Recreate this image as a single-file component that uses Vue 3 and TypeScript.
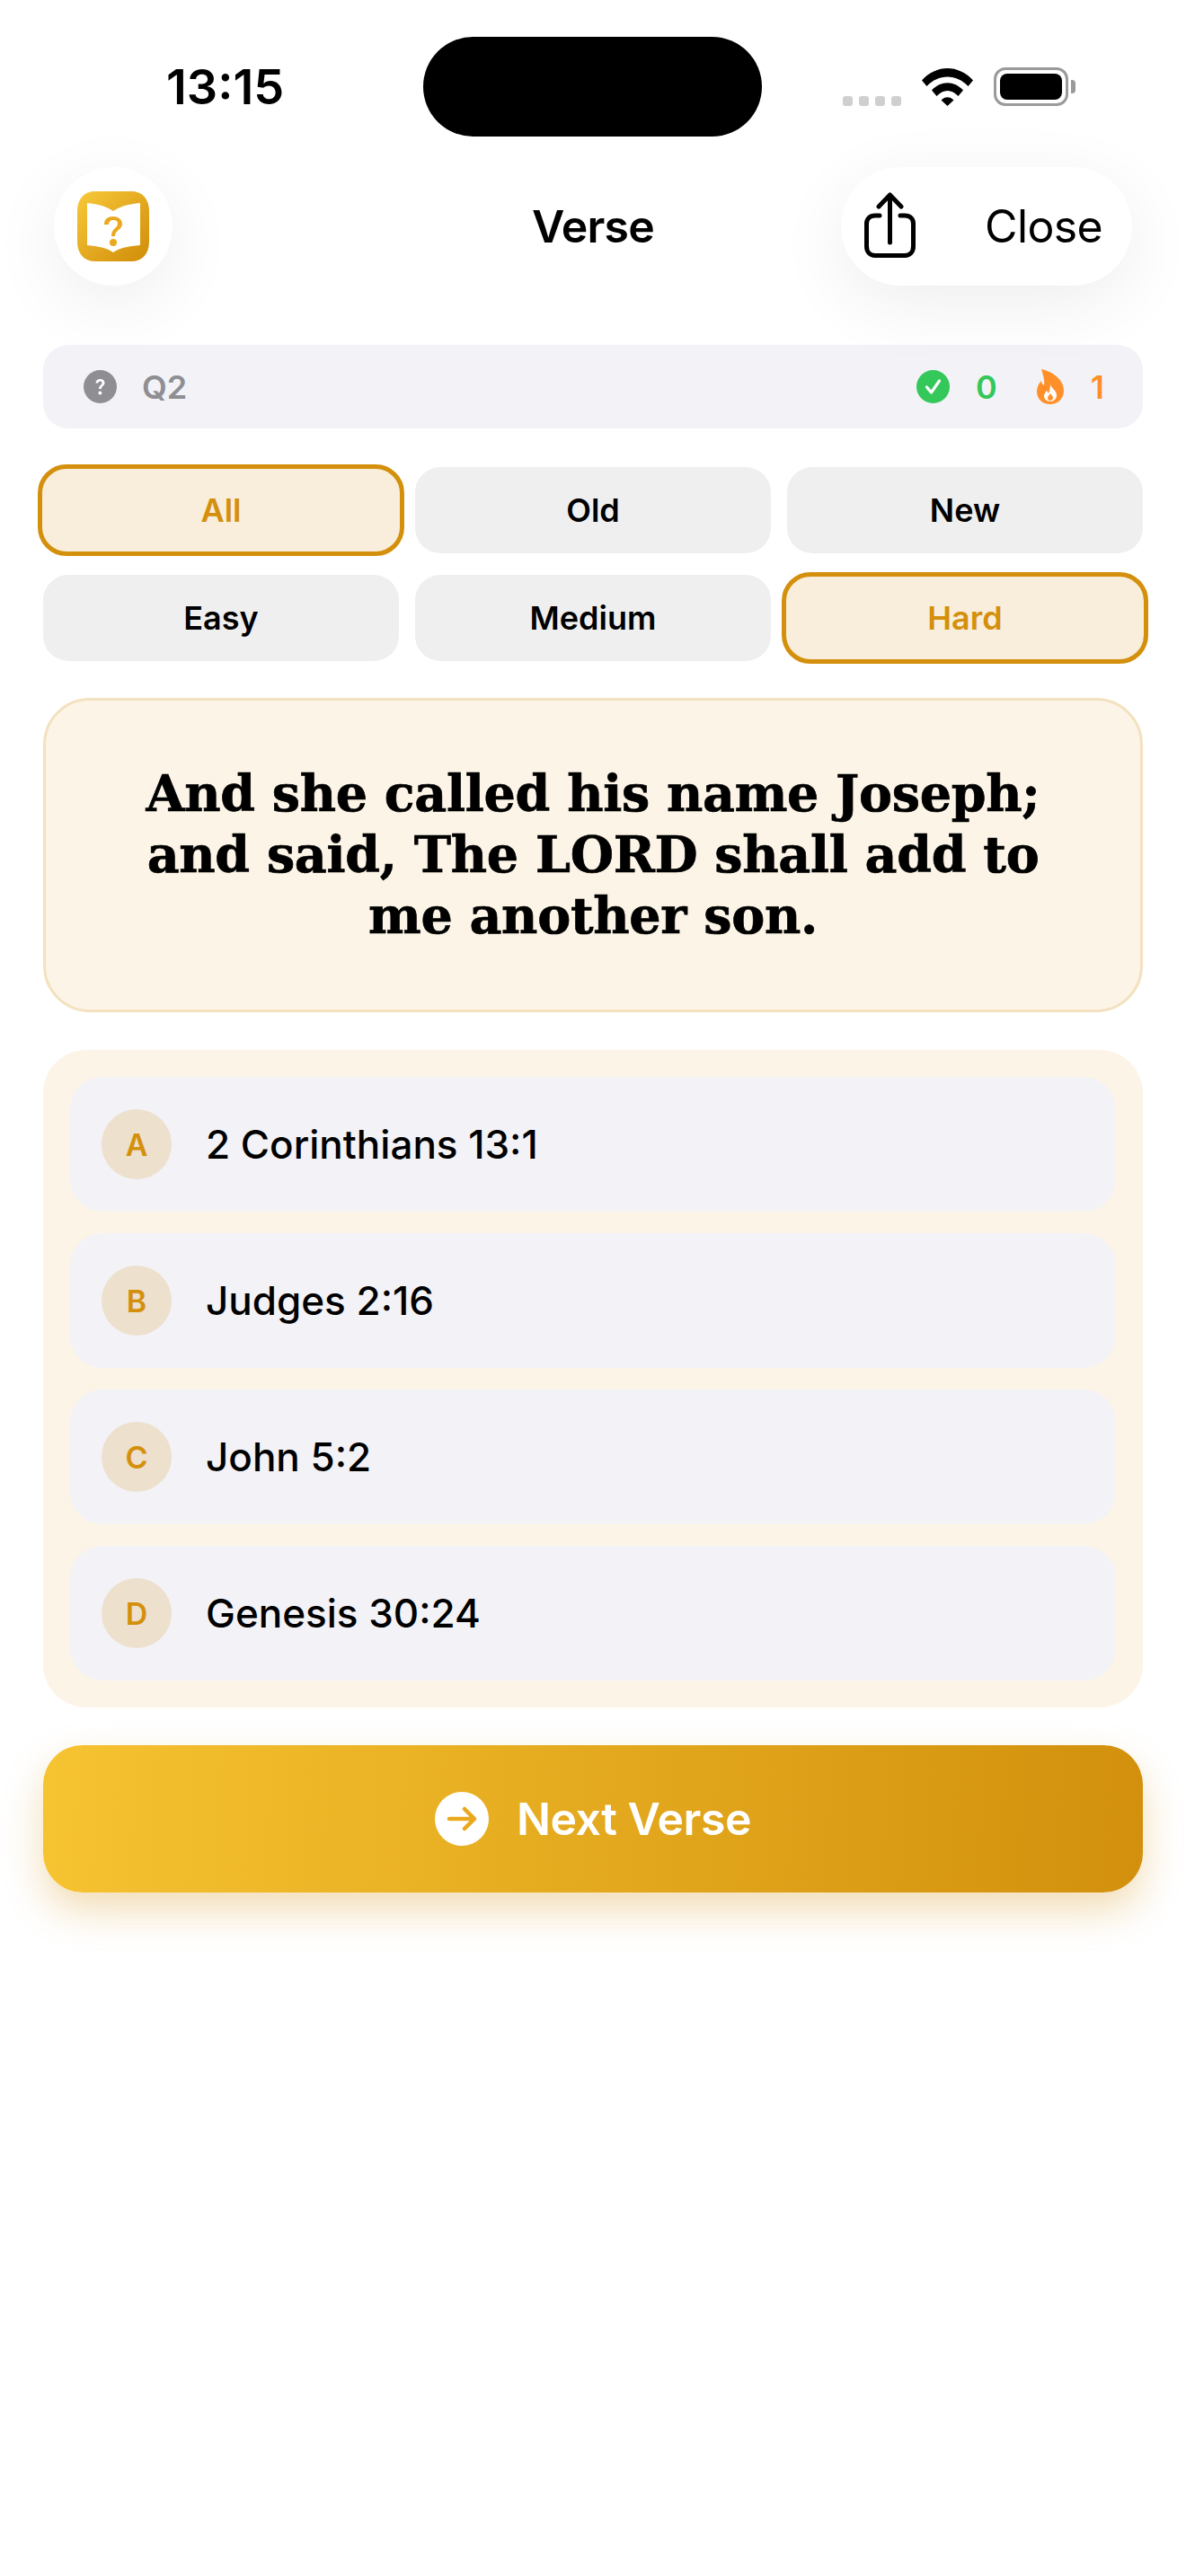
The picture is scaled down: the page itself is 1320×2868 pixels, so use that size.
<script setup lang="ts">
import { ref } from 'vue';

type Answer = { letter: string; reference: string };

const testamentFilters = ref(['All', 'Old', 'New']);
const levelFilters = ref(['Easy', 'Medium', 'Hard']);
const selectedTestament = ref('All');
const selectedLevel = ref('Hard');

const answers = ref<Answer[]>([
  { letter: 'A', reference: '2 Corinthians 13:1' },
  { letter: 'B', reference: 'Judges 2:16' },
  { letter: 'C', reference: 'John 5:2' },
  { letter: 'D', reference: 'Genesis 30:24' },
]);
</script>

<template>
  <div class="screen">
    <div class="status-bar">
      <span class="clock">13:15</span>
      <div class="island"></div>
      <div class="status-icons">
        <div class="signal"><i></i><i></i><i></i><i></i></div>
        <svg class="wifi" viewBox="0 0 57 42" width="57" height="42">
          <path d="M0 13.5C16-4.5 41-4.5 57 13.5L51.500 20C38.500 6 18.500 6 5.500 20Z" />
          <path d="M11 24.500C21 13.500 36 13.500 46 24.500L40.500 31C33 23 24 23 16.500 31Z" />
          <path d="M21.500 35.500C25.500 31 31.500 31 35.500 35.500L28.500 42Z" />
        </svg>
        <div class="battery"><div class="battery-fill"></div></div>
        <div class="battery-nub"></div>
      </div>
    </div>

    <header class="nav">
      <div class="nav-round">
        <svg class="logo" viewBox="0 0 80 78" width="80" height="78">
          <defs>
            <linearGradient id="logoGrad" x1="0" y1="0" x2="1" y2="1">
              <stop offset="0" stop-color="#f8c93a" />
              <stop offset="1" stop-color="#d08c08" />
            </linearGradient>
          </defs>
          <path d="M20 0H60C72 0 80 8 80 22V56C80 70 72 78 60 78H20C8 78 0 70 0 56V22C0 8 8 0 20 0Z" fill="url(#logoGrad)" />
          <path d="M11 13C23 14 33 17 40 22C47 17 57 14 70 13V60C57 61 47 63 40 68C33 63 23 61 11 60Z" fill="#fff" />
          <path d="M30 37C30 31 34 28 40 28C46 28 50 32 50 36C50 43 42 43 42 50H38C38 41 45 41 45 36C45 33 43 32 40 32C37 32 35 34 35 37Z" fill="#eaa81e" />
          <circle cx="40" cy="57" r="4" fill="#eaa81e" />
        </svg>
      </div>
      <h1 class="nav-title">Verse</h1>
      <div class="nav-pill">
        <svg class="share" viewBox="0 0 57 73" width="57" height="73">
          <path d="M17 26H12C6 26 2.500 29.500 2.500 35V60C2.500 66.500 6 70.500 12 70.500H45C51 70.500 54.500 66.500 54.500 60V35C54.500 29.500 51 26 45 26H40" fill="none" stroke="#000" stroke-width="5" stroke-linecap="round" />
          <path d="M28.500 56V3M16 16L28.500 3L41 16" fill="none" stroke="#000" stroke-width="5" stroke-linecap="round" stroke-linejoin="round" />
        </svg>
        <span class="close-label">Close</span>
      </div>
    </header>

    <main class="content">
      <section class="score-bar">
        <div class="score-left">
          <svg viewBox="0 0 37 37" width="37" height="37">
            <circle cx="18.500" cy="18.500" r="18.500" fill="#8e8e93" />
            <path d="M13.500 14.500C13.500 11.500 15.500 10 18.500 10C21.500 10 23.500 11.700 23.500 14.200C23.500 17.500 19.800 17.700 19.800 21H17C17 16.800 20.500 16.800 20.500 14.400C20.500 13 19.700 12.400 18.500 12.400C17.200 12.400 16.400 13.200 16.400 14.500Z" fill="#fff" />
            <circle cx="18.400" cy="25.500" r="2" fill="#fff" />
          </svg>
          <span class="question-no">Q2</span>
        </div>
        <div class="score-right">
          <svg viewBox="0 0 37 37" width="37" height="37">
            <circle cx="18.500" cy="18.500" r="18.500" fill="#34c759" />
            <path d="M11.500 19L16.500 25L25.500 12" fill="none" stroke="#fff" stroke-width="3.200" stroke-linecap="round" stroke-linejoin="round" />
          </svg>
          <span class="count-good">0</span>
          <svg class="flame" viewBox="0 0 30 39" width="30" height="39">
            <path d="M5 0C11 1 30 8 30 24C30 33 23 39 15 39C6 39 0 33 0 25C0 20 2 16 5 13C5 15 6 17 8 18C9 12 7 7 5 0Z" fill="#ff9029" />
            <path d="M15 17C16 21 22 24 22 29C22 33 19 36 15 36C11 36 8 33 8 30C8 27 10 26 11 24C12 25 12 26 13 27C14 24 15 21 15 17Z" fill="#fff" />
            <path d="M15 27C16 29 18 30 18 32C18 34 16 35 15 35C13 35 12 34 12 32C12 30 14 29 15 27Z" fill="#ff9029" />
          </svg>
          <span class="count-streak">1</span>
        </div>
      </section>

      <section class="filters">
        <button
          v-for="item in testamentFilters"
          :key="item"
          class="filter"
          :class="{ active: item === selectedTestament }"
          @click="selectedTestament = item"
        >{{ item }}</button>
        <button
          v-for="item in levelFilters"
          :key="item"
          class="filter"
          :class="{ active: item === selectedLevel }"
          @click="selectedLevel = item"
        >{{ item }}</button>
      </section>

      <section class="verse-card">
        <p>And she called his name Joseph;<br>and said, The LORD shall add to<br>me another son.</p>
      </section>

      <section class="answers">
        <div v-for="answer in answers" :key="answer.letter" class="answer">
          <span class="answer-letter">{{ answer.letter }}</span>
          <span class="answer-text">{{ answer.reference }}</span>
        </div>
      </section>

      <button class="next-btn">
        <svg viewBox="0 0 60 60" width="60" height="60">
          <circle cx="30" cy="30" r="30" fill="#fff" />
          <path d="M16 30H44M33 19L44 30L33 41" fill="none" stroke="#eaa81e" stroke-width="4.500" stroke-linecap="round" stroke-linejoin="round" />
        </svg>
        <span>Next Verse</span>
      </button>
    </main>
  </div>
</template>

<style>
html,
body {
  margin: 0;
  background: #fff;
}
</style>

<style scoped>
.screen {
  width: 1320px;
  height: 2868px;
  background: #fff;
  color: #000;
  font-family: Inter, "Liberation Sans", sans-serif;
  overflow: hidden;
}

.status-bar {
  display: flex;
  height: 186px;
  box-sizing: border-box;
  padding-top: 41px;
}

.clock {
  width: 286px;
  margin-left: 185px;
  font-size: 54px;
  font-weight: 600;
  line-height: 111px;
}

.island {
  width: 377px;
  height: 111px;
  border-radius: 56px;
  background: #000;
}

.status-icons {
  display: flex;
  align-items: flex-end;
  height: 77px;
  margin-left: 90px;
}

.signal {
  display: flex;
  gap: 7px;
  width: 88px;
}

.signal i {
  width: 11px;
  height: 11px;
  border-radius: 3px;
  background: #cfcfcf;
}

.wifi {
  display: block;
  fill: #000;
}

.battery {
  width: 83px;
  height: 43px;
  margin-left: 23px;
  padding: 4px;
  box-sizing: border-box;
  border: 3px solid #9a9a9a;
  border-radius: 13px;
}

.battery-fill {
  height: 100%;
  border-radius: 8px;
  background: #000;
}

.battery-nub {
  width: 5px;
  height: 15px;
  margin: 0 0 14px 3px;
  border-radius: 0 4px 4px 0;
  background: #9a9a9a;
}

.nav {
  position: relative;
  display: grid;
  grid-template-columns: 1fr auto 1fr;
  align-items: center;
  height: 132px;
  padding: 0 60px;
}

.nav-round,
.nav-pill {
  display: flex;
  align-items: center;
  height: 132px;
  background: #fff;
  box-shadow: 0 20px 80px rgba(0, 0, 0, 0.07);
}

.nav-round {
  justify-content: center;
  width: 132px;
  border-radius: 50%;
}

.logo {
  display: block;
}

.nav-title {
  margin: 0;
  font-size: 50px;
  font-weight: 600;
  letter-spacing: -0.8px;
}

.nav-pill {
  justify-self: end;
  box-sizing: border-box;
  width: 324px;
  padding-left: 26px;
  border-radius: 66px;
}

.share {
  display: block;
  margin-top: -3px;
}

.close-label {
  margin-left: 77px;
  font-size: 50px;
  font-weight: 400;
  letter-spacing: -0.6px;
}

.content {
  display: flex;
  flex-direction: column;
  padding: 66px 48px 0;
}

.score-bar {
  display: flex;
  justify-content: space-between;
  align-items: center;
  height: 93px;
  padding: 0 43px 0 45px;
  border-radius: 28px;
  background: #f2f2f7;
}

.score-bar svg {
  display: block;
}

.score-left,
.score-right {
  display: flex;
  align-items: center;
  font-size: 36px;
  font-weight: 600;
}

.question-no {
  margin-left: 28px;
  color: #8e8e93;
}

.count-good {
  margin-left: 29px;
  color: #34c759;
}

.flame {
  margin-left: 44px;
}

.count-streak {
  margin-left: 30px;
  color: #ff9029;
}

.filters {
  display: grid;
  grid-template-columns: repeat(3, 1fr);
  gap: 24px 18px;
  margin-top: 43px;
}

.filter {
  height: 96px;
  padding: 0;
  border: none;
  border-radius: 28px;
  background: #efeff0;
  color: #000;
  font-family: inherit;
  font-size: 36px;
  font-weight: 600;
}

.filter.active {
  height: 102px;
  margin: -3px -6px;
  border: 5px solid #d4900c;
  border-radius: 32px;
  background: #f9eedc;
  color: #d4900c;
}

.verse-card {
  display: flex;
  justify-content: center;
  align-items: center;
  box-sizing: border-box;
  height: 350px;
  margin-top: 41px;
  border: 3px solid #f3e1bf;
  border-radius: 52px;
  background: #fcf4e6;
}

.verse-card p {
  margin: 0;
  font-family: "DejaVu Serif", "Liberation Serif", serif;
  font-size: 55.5px;
  font-weight: 700;
  line-height: 68px;
  letter-spacing: -0.3px;
  -webkit-text-stroke: 0.7px #000;
  text-align: center;
}

.answers {
  display: flex;
  flex-direction: column;
  gap: 24px;
  margin-top: 42px;
  padding: 30px;
  border-radius: 48px;
  background: #fcf4e6;
}

.answer {
  display: flex;
  align-items: center;
  height: 150px;
  padding-left: 35px;
  border-radius: 36px;
  background: #f2f2f7;
}

.answer-letter {
  display: flex;
  justify-content: center;
  align-items: center;
  width: 78px;
  height: 78px;
  border-radius: 50%;
  background: #ede0cd;
  color: #d4900c;
  font-size: 34px;
  font-weight: 600;
}

.answer-text {
  margin-left: 38px;
  font-size: 44px;
  font-weight: 500;
}

.next-btn {
  display: flex;
  justify-content: center;
  align-items: center;
  gap: 31px;
  height: 164px;
  margin-top: 42px;
  padding: 0;
  border: none;
  border-radius: 44px;
  background: linear-gradient(93deg, #f6c331 0%, #d2900c 100%);
  box-shadow: 0 20px 44px rgba(212, 144, 12, 0.3);
  color: #fff;
  font-family: inherit;
  font-size: 50px;
  font-weight: 600;
  letter-spacing: -0.5px;
}

.next-btn svg {
  display: block;
}
</style>
